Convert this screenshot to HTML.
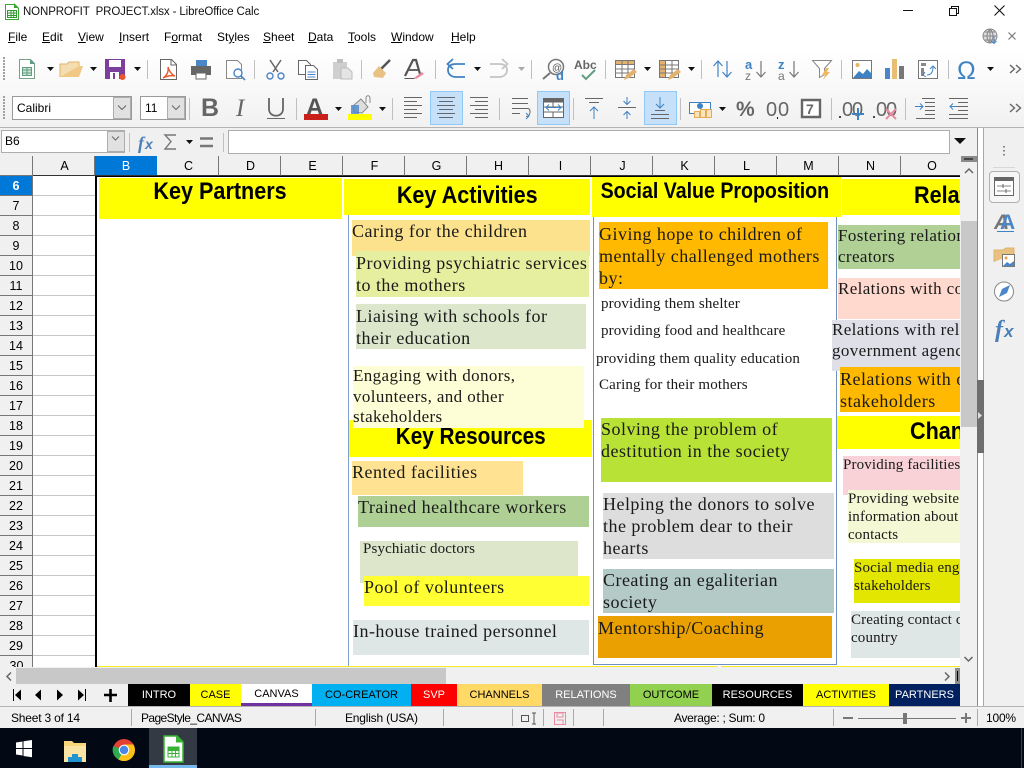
<!DOCTYPE html>
<html><head><meta charset="utf-8"><title>NONPROFIT PROJECT.xlsx - LibreOffice Calc</title>
<style>
html,body{margin:0;padding:0;width:1024px;height:768px;overflow:hidden;background:#f0f0f0;font-family:"Liberation Sans",sans-serif;font-size:12px;color:#000}
div,span{position:absolute;white-space:pre;box-sizing:border-box}
.m{top:30px;line-height:14px;font-size:12px}.m u{text-decoration:underline}
.hc{top:156px;height:20px;line-height:21px;text-align:center;width:62px;background:#f0f0f0;border-right:1px solid #777;border-bottom:1px solid #333;font-size:12.5px;padding-left:2px}
.rh{left:0;width:33px;height:20px;line-height:20px;text-align:center;background:#f0f0f0;border-bottom:1px solid #777;border-right:1px solid #777;font-size:12.5px}
.c{font-family:"Liberation Serif",serif;font-size:18px;line-height:22px;color:#1a1a1a;letter-spacing:.48px}
.f15{font-size:15px;line-height:18px;letter-spacing:.14px}
.f17{font-size:17px;letter-spacing:.38px}
.h{font-weight:bold;text-align:center;color:#000;font-size:24px;background:#ff0}
.h b{display:inline-block;transform:scaleX(.9)}
.h b.l{transform-origin:left center}
.t{top:684px;height:22px;line-height:22px;text-align:center;font-size:11px}
.s{top:711px;line-height:15px;font-size:12px;letter-spacing:-.2px}
.sp{top:709px;width:1px;height:17px;background:#aaa}
</style></head><body>
<!-- top chrome -->
<div style="left:0;top:0;width:1024px;height:50px;background:#fff"></div>
<div style="left:0;top:50px;width:1024px;height:77px;background:linear-gradient(#fff,#f1f1f1)"></div>
<div style="left:0;top:127px;width:1024px;height:1px;background:#b4b4b4"></div>
<div style="left:23px;top:5px;font-size:11.5px;letter-spacing:-.12px;line-height:15px;color:#111">NONPROFIT  PROJECT.xlsx - LibreOffice Calc</div>
<div class="m" style="left:8px"><u>F</u>ile</div>
<div class="m" style="left:42px"><u>E</u>dit</div>
<div class="m" style="left:78px"><u>V</u>iew</div>
<div class="m" style="left:119px"><u>I</u>nsert</div>
<div class="m" style="left:164px">F<u>o</u>rmat</div>
<div class="m" style="left:217px">St<u>y</u>les</div>
<div class="m" style="left:263px"><u>S</u>heet</div>
<div class="m" style="left:308px"><u>D</u>ata</div>
<div class="m" style="left:348px"><u>T</u>ools</div>
<div class="m" style="left:391px"><u>W</u>indow</div>
<div class="m" style="left:451px"><u>H</u>elp</div>

<!-- toolbar fields -->
<div style="left:12px;top:96px;width:120px;height:24px;background:#fff;border:1px solid #9a9a9a;line-height:22px;padding-left:4px;font-size:12px">Calibri</div>
<div style="left:113px;top:97px;width:18px;height:22px;background:#e1e1e1;border:1px solid #adadad"></div>
<div style="left:140px;top:96px;width:46px;height:24px;background:#fff;border:1px solid #9a9a9a;line-height:22px;padding-left:4px;font-size:12px">11</div>
<div style="left:167px;top:97px;width:18px;height:22px;background:#e1e1e1;border:1px solid #adadad"></div>
<div style="left:430px;top:91px;width:33px;height:34px;background:#c5e0f8;border:1px solid #90c8f6"></div>
<div style="left:537px;top:91px;width:33px;height:34px;background:#c5e0f8;border:1px solid #90c8f6"></div>
<div style="left:644px;top:91px;width:33px;height:34px;background:#c5e0f8;border:1px solid #90c8f6"></div>

<!-- formula bar -->
<div style="left:0;top:128px;width:977px;height:28px;background:#f0f0f0"></div>
<div style="left:1px;top:130px;width:124px;height:23px;background:#fff;border:1px solid #adadad;line-height:21px;padding-left:3px;font-size:12px">B6</div>
<div style="left:107px;top:131px;width:18px;height:21px;background:#e1e1e1;border:1px solid #adadad"></div>
<div style="left:228px;top:130px;width:722px;height:24px;background:#fff;border:1px solid #adadad"></div>

<!-- column headers -->
<div style="left:0;top:156px;width:33px;height:20px;background:#f0f0f0;border-right:1px solid #777;border-bottom:1px solid #777"></div>
<div class="hc" style="left:33px">A</div>
<div class="hc" style="left:95px;background:#0078d7;color:#fff;border-right:0;padding-left:0">B</div>
<div class="hc" style="left:157px">C</div>
<div class="hc" style="left:219px">D</div>
<div class="hc" style="left:281px">E</div>
<div class="hc" style="left:343px">F</div>
<div class="hc" style="left:405px">G</div>
<div class="hc" style="left:467px">H</div>
<div class="hc" style="left:529px">I</div>
<div class="hc" style="left:591px">J</div>
<div class="hc" style="left:653px">K</div>
<div class="hc" style="left:715px">L</div>
<div class="hc" style="left:777px">M</div>
<div class="hc" style="left:839px">N</div>
<div class="hc" style="left:901px;width:60px;border-right:0;padding-left:2px">O</div>

<!-- row headers -->
<div class="rh" style="top:176px;background:#0078d7;color:#fff;font-weight:bold">6</div>
<div class="rh" style="top:196px">7</div><div class="rh" style="top:216px">8</div><div class="rh" style="top:236px">9</div>
<div class="rh" style="top:256px">10</div><div class="rh" style="top:276px">11</div><div class="rh" style="top:296px">12</div>
<div class="rh" style="top:316px">13</div><div class="rh" style="top:336px">14</div><div class="rh" style="top:356px">15</div>
<div class="rh" style="top:376px">16</div><div class="rh" style="top:396px">17</div><div class="rh" style="top:416px">18</div>
<div class="rh" style="top:436px">19</div><div class="rh" style="top:456px">20</div><div class="rh" style="top:476px">21</div>
<div class="rh" style="top:496px">22</div><div class="rh" style="top:516px">23</div><div class="rh" style="top:536px">24</div>
<div class="rh" style="top:556px">25</div><div class="rh" style="top:576px">26</div><div class="rh" style="top:596px">27</div>
<div class="rh" style="top:616px">28</div><div class="rh" style="top:636px">29</div>
<div style="left:0;top:656px;width:33px;height:11px;overflow:hidden;background:#f0f0f0;border-right:1px solid #777"><span style="left:0;top:0;width:33px;text-align:center;line-height:20px;font-size:12.5px">30</span></div>

<!-- column A grid -->
<div style="left:33px;top:176px;width:62px;height:491px;background:repeating-linear-gradient(#fff 0,#fff 19px,#c6c6c6 19px,#c6c6c6 20px)"></div>

<!-- sheet -->
<div style="left:95px;top:176px;width:865px;height:491px;background:#fff;overflow:hidden">
<div style="left:0;top:0;width:2px;height:491px;background:#000"></div>
<div style="left:0;top:0;width:866px;height:1px;background:#000"></div>
<div style="left:2px;top:490px;width:864px;height:2px;background:#f7ea1e"></div>
<div style="left:623px;top:490px;width:3px;height:2px;background:#fff"></div>
<div style="left:253px;top:39px;width:1px;height:451px;background:#7f9fcc"></div>
<div style="left:498px;top:39px;width:244px;height:450px;border:1px solid #6f8fbf;border-top:0"></div>

<!-- shifted coordinates: left-95, top-176 -->
<div class="h" style="left:4px;top:2px;width:243px;height:41px;line-height:28px"><b>Key Partners</b></div>
<div class="h" style="left:249px;top:3px;width:246px;height:36px;line-height:33px"><b>Key Activities</b></div>
<div class="h" style="left:497px;top:1px;width:249px;height:40px;line-height:28px;font-size:22px;padding-right:4px"><b style="transform:translateX(-5.5px) scaleX(.89)">Social Value Proposition</b></div>
<div class="h" style="left:747px;top:3px;width:119px;height:36px;line-height:34px;text-align:left;padding-left:72px"><b class="l">Relationships</b></div>
<div class="h" style="left:254px;top:244px;width:243px;height:37px;line-height:33px"><b style="transform:scaleX(.865)">Key Resources</b></div>
<div class="h" style="left:742px;top:240px;width:124px;height:33px;line-height:32px;text-align:left;padding-left:73px"><b class="l">Channels</b></div>

<div class="c" style="left:257px;top:44px;width:238px;height:36px;background:#fde28d">Caring for the children</div>
<div class="c" style="left:261px;top:75px;width:233px;height:46px;background:#e6ef9f;padding-top:1px">Providing psychiatric services
to the mothers</div>
<div class="c" style="left:261px;top:128px;width:230px;height:45px;background:#dce6cb;padding-top:1px">Liaising with schools for
their education</div>
<div class="c f17" style="left:258px;top:190px;width:231px;height:62px;background:#fdfed5;line-height:20.5px">Engaging with donors,
volunteers, and other
stakeholders</div>
<div class="c" style="left:257px;top:285px;width:171px;height:34px;background:#ffe392">Rented facilities</div>
<div class="c" style="left:263px;top:320px;width:231px;height:31px;background:#afd095">Trained healthcare workers</div>
<div class="c f15" style="left:265px;top:365px;width:218px;height:42px;background:#dde6cb;line-height:17px;padding-left:3px">Psychiatic doctors</div>
<div class="c" style="left:269px;top:400px;width:225px;height:30px;background:#ffff33">Pool of volunteers</div>
<div class="c" style="left:258px;top:444px;width:236px;height:35px;background:#dfe7e6">In-house trained personnel</div>

<div class="c" style="left:504px;top:46px;width:229px;height:67px;background:#ffb900;padding-top:1px">Giving hope to children of
mentally challenged mothers
by:</div>
<div class="c f15" style="left:506px;top:119px">providing them shelter</div>
<div class="c f15" style="left:506px;top:146px">providing food and healthcare</div>
<div class="c f15" style="left:501px;top:174px">providing them quality education</div>
<div class="c f15" style="left:504px;top:200px">Caring for their mothers</div>
<div class="c" style="left:506px;top:242px;width:231px;height:64px;background:#b9e237">Solving the problem of
destitution in the society</div>
<div class="c" style="left:508px;top:317px;width:231px;height:66px;background:#dddddd">Helping the donors to solve
the problem dear to their
hearts</div>
<div class="c" style="left:508px;top:393px;width:231px;height:44px;background:#b3cac7">Creating an egaliterian
society</div>
<div class="c" style="left:503px;top:440px;width:234px;height:42px;background:#e9a000;line-height:24px">Mentorship/Coaching</div>

<div class="c f17" style="left:743px;top:49px;width:123px;height:44px;background:#b0d096;line-height:21px">Fostering relationships with co-
creators</div>
<div class="c f17" style="left:743px;top:102px;width:123px;height:41px;background:#ffd8ce;line-height:21px">Relations with community</div>
<div class="c f17" style="left:737px;top:144px;width:129px;height:51px;background:#dfdfe8;line-height:20.5px">Relations with relevant
government agencies</div>
<div class="c" style="left:745px;top:191px;width:121px;height:45px;background:#ffb900;padding-top:1px">Relations with other
stakeholders</div>
<div class="c f15" style="left:748px;top:280px;width:118px;height:39px;background:#f8d2d6">Providing facilities to mothers</div>
<div class="c f15" style="left:753px;top:314px;width:113px;height:53px;background:#f5f8d5">Providing website for
information about activities and
contacts</div>
<div class="c f15" style="left:759px;top:383px;width:107px;height:44px;background:#e3e600">Social media engagement with
stakeholders</div>
<div class="c f15" style="left:756px;top:435px;width:110px;height:47px;background:#dfe7e6">Creating contact centers across
country</div>
</div>

<!-- vertical scrollbar -->
<div style="left:960px;top:156px;width:17px;height:511px;background:#f0f0f0"></div>
<div style="left:961px;top:156px;width:16px;height:6px;background:#8b8b8b"></div>
<div style="left:961px;top:221px;width:16px;height:206px;background:#c8c8c8"></div>
<div style="left:977px;top:128px;width:1px;height:579px;background:#8a8a8a"></div>
<div style="left:978px;top:128px;width:5px;height:579px;background:#fff"></div>
<div style="left:983px;top:128px;width:1px;height:579px;background:#a8a8a8"></div>
<div style="left:977px;top:380px;width:7px;height:73px;background:#6e6e6e"></div>
<div style="left:984px;top:128px;width:40px;height:579px;background:#f0f0f0"></div>
<div style="left:989px;top:171px;width:31px;height:32px;border:1px solid #b0b0b0;border-radius:4px;background:#f6f6f6"></div>

<!-- hscroll -->
<div style="left:0;top:667px;width:961px;height:17px;background:#f0f0f0"></div>
<div style="left:16px;top:668px;width:430px;height:16px;background:#c8c8c8"></div>
<div style="left:955px;top:668px;width:5px;height:16px;background:#8b8b8b"></div>
<div style="left:957px;top:671px;width:1px;height:10px;background:#000"></div>

<!-- tabs -->
<div style="left:0;top:684px;width:977px;height:22px;background:#f0f0f0"></div>
<div class="t" style="left:128px;width:62px;background:#000;color:#fff">INTRO</div>
<div class="t" style="left:190px;width:51px;background:#ff0">CASE</div>
<div class="t" style="left:241px;width:71px;background:#fff;border-bottom:3px solid #7030a0;line-height:21px">CANVAS</div>
<div class="t" style="left:312px;width:99px;background:#00b0f0">CO-CREATOR</div>
<div class="t" style="left:411px;width:46px;background:#f00;color:#fff">SVP</div>
<div class="t" style="left:457px;width:85px;background:#ffd966">CHANNELS</div>
<div class="t" style="left:542px;width:88px;background:#808080;color:#fff">RELATIONS</div>
<div class="t" style="left:630px;width:82px;background:#92d050">OUTCOME</div>
<div class="t" style="left:712px;width:91px;background:#000;color:#fff">RESOURCES</div>
<div class="t" style="left:803px;width:86px;background:#ff0">ACTIVITIES</div>
<div class="t" style="left:889px;width:71px;background:#002060;color:#fff">PARTNERS</div>

<!-- status bar -->
<div style="left:0;top:706px;width:1024px;height:1px;background:#b4b4b4"></div>
<div style="left:0;top:707px;width:1024px;height:21px;background:#f0f0f0"></div>
<div class="s" style="left:11px">Sheet 3 of 14</div>
<div class="s" style="left:141px;letter-spacing:-.6px">PageStyle_CANVAS</div>
<div class="s" style="left:345px">English (USA)</div>
<div class="s" style="left:674px;letter-spacing:-.3px">Average: ; Sum: 0</div>
<div class="s" style="left:986px">100%</div>
<div class="sp" style="left:131px"></div><div class="sp" style="left:315px"></div><div class="sp" style="left:443px"></div>
<div class="sp" style="left:512px"></div><div class="sp" style="left:543px"></div><div class="sp" style="left:573px"></div><div class="sp" style="left:603px"></div>
<div class="sp" style="left:833px"></div><div class="sp" style="left:977px"></div>

<!-- taskbar -->
<div style="left:0;top:728px;width:1024px;height:40px;background:#020914"></div>
<div style="left:149px;top:728px;width:48px;height:40px;background:#333a44"></div>
<div style="left:149px;top:765px;width:48px;height:3px;background:#76b9ed"></div>

<!-- icon layer -->
<svg style="position:absolute;left:0;top:0" width="1024" height="768" viewBox="0 0 1024 768" fill="none">
<!-- title icon -->
<path d="M5.5 4.500h9l4 4v11h-13z" fill="#fff" stroke="#3aa535"/><path d="M14 3l5 5h-5z" fill="#3aa535"/><path d="M7.500 10.500h9v7h-9zM7.500 13h9M7.500 15.500h9M11 10.500v7M13.700 10.500v7" stroke="#2f9a2b"/>
<!-- window controls -->
<path d="M903 10.500h10" stroke="#111"/><path d="M949.500 8.500h7v7h-7zM951.500 8.500v-2h7v7h-2" stroke="#111"/><path d="M994.500 5.500l10 10M1004.500 5.500l-10 10" stroke="#111" stroke-width="1.100"/>
<!-- globe / close -->
<g stroke="#888"><circle cx="990" cy="36" r="7" fill="#ddd"/><path d="M983 36h14M990 29v14M985 32h10M985 40h10M990 29c-4 4-4 10 0 14M990 29c4 4 4 10 0 14"/></g><path d="M994 36v7M991.500 41l2.500 2.500 2.500-2.500" stroke="#4a86c8"/>
<path d="M1008.500 32.500l7 7M1015.500 32.500l-7 7" stroke="#777" stroke-width="1.200"/>

<!-- grips -->
<g stroke="#a0a0a0" stroke-width="2" stroke-dasharray="2 1"><path d="M4 57v23M4 96v24"/></g>

<!-- Toolbar 1 -->
<path d="M19.500 59.500h11l4 4v15h-15z" fill="#fff" stroke="#7aa08c"/><path d="M30 59l5 5h-5z" fill="#5f9e7e"/><path d="M22.500 67.500h9v8h-9z" stroke="#5f9e7e" fill="#cfe3d8"/><path d="M22.500 70h9M22.500 73h9M27 67.500v8" stroke="#5f9e7e"/>
<path d="M47 67h7l-3.500 4z" fill="#111"/>
<path d="M60 77l3-11h20l-4 11z" fill="#f0c987"/><path d="M60 77V64h7l2-2h10v4" fill="#f5ddb2" stroke="#e0b36a"/>
<path d="M90 67h7l-3.500 4z" fill="#111"/>
<path d="M105 59h20v20h-20z" fill="#7c3f9c"/><path d="M109 60h12v7h-12zM110 72h9v7h-9z" fill="#fff"/><path d="M113 73h2v6h-2z" fill="#7c3f9c"/><circle cx="122.500" cy="77" r="3" fill="#e8562e"/>
<path d="M134 67h7l-3.500 4z" fill="#111"/>
<path d="M147.500 60v19M254.500 60v19M361.500 60v19M435.500 60v19M531.500 60v19M605.500 60v19M701.500 60v19M841.500 60v19M948.500 60v19" stroke="#c0c0c0"/>
<!-- pdf -->
<path d="M160.500 59.500h11l5 5v15h-16z" fill="#fff" stroke="#666"/><path d="M171 60v5h5" stroke="#666"/><path d="M168 67c1 6-2 9-5 11 4-2 8-3 12-2-3-1-6-5-7-9z" stroke="#e8562e" stroke-width="1.400"/>
<!-- print -->
<path d="M196.500 60.500h10v6h-10z" fill="#4a86c8" stroke="#4a86c8"/><path d="M191 66h20v9h-20z" fill="#666"/><path d="M196 73h10v6h-10z" fill="#fff" stroke="#666"/>
<!-- preview -->
<path d="M226.500 60.500h11l4 4v14h-15z" fill="#fff" stroke="#888"/><circle cx="238" cy="73" r="4" fill="#fff" stroke="#4a86c8" stroke-width="1.400"/><path d="M241 76l4 4" stroke="#4a86c8" stroke-width="1.600"/>
<!-- cut -->
<path d="M270 60l8 12M281 60l-8 12" stroke="#666" stroke-width="1.500"/><circle cx="270" cy="76" r="3" stroke="#4a86c8" stroke-width="1.400"/><circle cx="281" cy="76" r="3" stroke="#4a86c8" stroke-width="1.400"/>
<!-- copy -->
<path d="M298.500 60.500h8l4 4v10h-12z" fill="#fff" stroke="#666"/><path d="M305.500 65.500h8l4 4v10h-12z" fill="#fff" stroke="#666"/><path d="M307.500 72h8M307.500 74.500h8M307.500 77h8" stroke="#4a86c8"/>
<!-- paste (disabled) -->
<path d="M333 62h14v17h-14z" fill="#cfcfcf"/><path d="M337 59h6v4h-6z" fill="#bdbdbd"/><path d="M341 68h7l4 4v7h-11z" fill="#e4e4e4" stroke="#bbb"/>
<!-- brush -->
<path d="M390 60l-9 9" stroke="#555" stroke-width="2.500"/><path d="M379 66l7 7-3 5-9-1-1-4z" fill="#e9c184"/>
<!-- clear formatting -->
<path d="M405 76l8-16h3l4 14" stroke="#555" stroke-width="2.200"/><path d="M409 70h9" stroke="#555" stroke-width="1.800"/><path d="M404.500 78.500h10" stroke="#555"/><path d="M414 78l8-6 2 2-8 5z" fill="#e98aa0"/>
<!-- undo -->
<path d="M463 77h-9c-5 0-8-3-8-7s3-6 8-6h9M451 59l-5.500 5 5.500 5" stroke="#3f82c4" stroke-width="1.800" transform="translate(2 0)"/>
<path d="M474 67h7l-3.500 4z" fill="#111"/>
<path d="M490 77h9c5 0 8-3 8-7s-3-6-8-6h-9M502 59l5.500 5-5.500 5" stroke="#c4c4c4" stroke-width="1.800"/>
<path d="M518 67h7l-3.500 4z" fill="#aaa"/>
<!-- find -->
<circle cx="556" cy="67" r="7.500" stroke="#777" stroke-width="1.500"/><path d="M550 73l-7 6" stroke="#777" stroke-width="2"/><text x="552" y="71" font-size="10" fill="#555" font-family="Liberation Sans">@</text><text x="556" y="80" font-size="13" fill="#3f82c4" font-family="Liberation Sans" font-weight="bold">d</text>
<!-- spell -->
<text x="574" y="69" font-size="12" font-weight="bold" fill="#666" font-family="Liberation Sans">Abc</text><path d="M582 75l4 4 9-9" stroke="#5f9e7e" stroke-width="2"/>
<!-- table rows -->
<path d="M615.500 60.500h19v17h-19z" fill="#fff" stroke="#777"/><path d="M615.500 60.500h19v4h-19z" fill="#e3b26e" stroke="#777"/><path d="M615.500 69h19M615.500 73h19M622 60.500v17M628 60.500v17" stroke="#777"/><path d="M624 80l2-5 8-6 3 3-8 6z" fill="#e3b26e"/>
<path d="M644 67h7l-3.500 4z" fill="#111"/>
<path d="M659.500 60.500h19v17h-19z" fill="#fff" stroke="#777"/><path d="M659.500 60.500h6v17h-6z" fill="#e3b26e" stroke="#777"/><path d="M659.500 65h19M659.500 69h19M659.500 73h19M672 60.500v17" stroke="#777"/><path d="M668 80l2-5 8-6 3 3-8 6z" fill="#e3b26e"/>
<path d="M688 67h7l-3.500 4z" fill="#111"/>
<!-- sort -->
<path d="M718 77V62M713.500 66l4.500-5 4.500 5" stroke="#3f82c4" stroke-width="1.200"/><path d="M727 61v15M722.500 72l4.500 5 4.500-5" stroke="#3f82c4" stroke-width="1.200"/>
<text x="745" y="69" font-size="13" font-weight="bold" fill="#3f82c4" font-family="Liberation Sans">a</text><text x="745" y="80" font-size="12" fill="#777" font-family="Liberation Sans">z</text><path d="M761 61v15M756.500 72l4.500 5 4.500-5" stroke="#777" stroke-width="1.200"/>
<text x="778" y="69" font-size="13" font-weight="bold" fill="#3f82c4" font-family="Liberation Sans">z</text><text x="778" y="80" font-size="12" fill="#777" font-family="Liberation Sans">a</text><path d="M794 61v15M789.500 72l4.500 5 4.500-5" stroke="#777" stroke-width="1.200"/>
<!-- autofilter -->
<path d="M812.500 60.500h19l-7 8v6l-5 3v-9z" fill="#fff" stroke="#888"/><path d="M826 68l-4 7h3l-2 5 7-8h-3l2-4z" fill="#eeb95c"/>
<!-- image -->
<path d="M852.500 60.500h19v18h-19z" fill="#fff" stroke="#777"/><circle cx="857.500" cy="65" r="2" fill="#e8b060"/><path d="M853 78l6-7 4 3 4-5 4 4v5z" fill="#3f82c4"/>
<!-- chart -->
<path d="M885 68h5v11h-5z" fill="#4a86c8"/><path d="M892 59h5v20h-5z" fill="#e8bd76"/><path d="M899 66h5v13h-5z" fill="#777"/>
<!-- pivot -->
<path d="M918.500 60.500h19v18h-19z" fill="#fff" stroke="#777"/><path d="M921 63h5v3h-5zM921 68h3v8h-3z" fill="#888"/><path d="M927 75c4 0 6-3 6-8M930 69l3-3 3 3M925 72l-2 3 3 2" stroke="#3f82c4"/>
<!-- omega -->
<text x="957" y="79" font-size="25" fill="#3f82c4" font-family="Liberation Sans">Ω</text>
<path d="M987 67h7l-3.500 4z" fill="#111"/>
<path d="M1010 65l4.500 4-4.500 4M1016 65l4.500 4-4.500 4" stroke="#666" stroke-width="1.400"/>

<!-- Toolbar 2 -->
<path d="M118 105.500l4 4 4-4M172 105.500l4 4 4-4M112 136.500l3.500 3.500 3.500-3.500" stroke="#666"/>
<path d="M189.500 98v22M296.500 98v22M392.500 98v22M499.500 98v22M573.500 98v22M680.500 98v22M831.500 98v22M905.500 98v22" stroke="#c0c0c0"/>
<text x="201" y="116" font-size="25" font-weight="bold" fill="#666" font-family="Liberation Sans">B</text>
<text x="236" y="116" font-size="25" fill="#666" font-style="italic" font-family="Liberation Serif">I</text>
<path d="M269 98v11c0 9 14 9 14 0V98" stroke="#666" stroke-width="1.800"/><path d="M267 118.500h18" stroke="#666"/>
<text x="306" y="115" font-size="24" font-weight="bold" fill="#555" font-family="Liberation Sans">A</text><path d="M304 114h24v6h-24z" fill="#c9201c"/>
<path d="M335 107h7l-3.500 4z" fill="#111"/>
<path d="M348 114h24v6h-24z" fill="#ff0"/><path d="M353 106l8-7 7 8-6 6-8-1z" fill="#ddd" stroke="#888"/><path d="M351 105h8v9h-8z" fill="#4a86c8" opacity=".8"/><path d="M366 103v-5c0-3 4-3 4 0v5" stroke="#888"/>
<path d="M379 107h7l-3.500 4z" fill="#111"/>
<path d="M404 98.500h18M404 102.500h13M404 106.500h18M404 110.500h13M404 114.500h18M404 118.500h13" stroke="#666" transform="translate(0 -1)"/>
<path d="M437 98.500h18M439 102.500h14M437 106.500h18M439 110.500h14M437 114.500h18M439 118.500h14" stroke="#666" transform="translate(0 -1)"/>
<path d="M470 98.500h18M475 102.500h13M470 106.500h18M475 110.500h13M470 114.500h18M475 118.500h13" stroke="#666" transform="translate(0 -1)"/>
<path d="M512 98.500h16M512 103.500h16M512 108.500h16c3 0 3 8-2 8M512 113.500h8" stroke="#666"/><path d="M526 113l3 3-3 3" stroke="#3f82c4"/>
<path d="M543.500 98.500h20v19h-20z" fill="#fff" stroke="#666"/><path d="M543.500 98.500h20v4h-20z" fill="#666"/><path d="M543.500 107h20M543.500 112h20M553 102v5M553 112v5" stroke="#666"/><path d="M546 107.500h15M549 104.500l-3 3 3 3M558 104.500l3 3-3 3" stroke="#3f82c4"/>
<path d="M585 98.500h18M589 102.500h10" stroke="#666"/><path d="M594 119v-12M590 111l4-4 4 4" stroke="#3f82c4"/>
<path d="M618 107.500h18" stroke="#666"/><path d="M627 97v7M623.500 101l3.500 3.500 3.500-3.500M627 119v-8M623.500 115l3.500-3.500 3.500 3.500" stroke="#3f82c4"/>
<path d="M651 114.500h18M651 118.500h18M655 110.500h10" stroke="#666"/><path d="M660 97v11M656 104l4 4 4-4" stroke="#3f82c4"/>
<path d="M689.500 102.500h21v11h-21z" fill="#fff" stroke="#3f82c4"/><circle cx="700" cy="106" r="3" fill="#3f82c4"/><g fill="#fbe3bd" stroke="#e6ab55"><rect x="694.500" y="111.500" width="5" height="6"/><rect x="700.500" y="109.500" width="5" height="8"/><rect x="706.500" y="109.500" width="5" height="8"/></g>
<path d="M719 107h7l-3.500 4z" fill="#111"/>
<text x="736" y="116" font-size="21" font-weight="bold" fill="#666" font-family="Liberation Sans">%</text>
<text x="766" y="116" font-size="20" fill="#666" font-family="Liberation Sans">0</text><text x="778" y="116" font-size="20" fill="#666" font-family="Liberation Sans">0</text><path d="M777.500 117v2" stroke="#111"/>
<path d="M802 100h18v17h-18z" fill="#fff" stroke="#666" stroke-width="2.400"/><text x="806" y="114" font-size="14" font-weight="bold" fill="#666" font-family="Liberation Sans">7</text>
<text x="842" y="116" font-size="20" fill="#666" font-family="Liberation Sans">0</text><text x="852" y="116" font-size="20" fill="#666" font-family="Liberation Sans">0</text><path d="M840 116v2M874 116v2" stroke="#111" stroke-width="1.500"/><path d="M858 108v12M852 114h12" stroke="#3f82c4" stroke-width="2"/>
<text x="876" y="116" font-size="20" fill="#666" font-family="Liberation Sans">0</text><text x="886" y="116" font-size="20" fill="#666" font-family="Liberation Sans">0</text><path d="M886 109l10 10M896 109l-10 10" stroke="#e98aa0" stroke-width="2"/>
<path d="M922 98.500h13M925 102.500h10M925 106.500h10M925 110.500h10M925 114.500h10M916 118.500h19" stroke="#666"/><path d="M915 106.500h8M920 103.500l3 3-3 3" stroke="#3f82c4"/>
<path d="M949 98.500h19M958 102.500h10M958 106.500h10M958 110.500h10M949 114.500h19M949 118.500h19" stroke="#666"/><path d="M958 106.500h-8M953 103.500l-3 3 3 3" stroke="#3f82c4"/>
<path d="M1010 104l4.500 4-4.500 4M1016 104l4.500 4-4.500 4" stroke="#666" stroke-width="1.400"/>

<!-- formula bar icons -->
<path d="M129.500 133v19M223.500 133v19" stroke="#c0c0c0"/>
<text x="138" y="149" font-size="18" font-weight="bold" font-style="italic" fill="#4a7fb8" font-family="Liberation Serif">f</text><text x="145" y="149" font-size="14" font-weight="bold" font-style="italic" fill="#4a7fb8" font-family="Liberation Sans">x</text>
<path d="M176 135h-11l6 6.500-6 7.500h11" stroke="#777" stroke-width="1.400"/>
<path d="M186 140h7l-3.500 4z" fill="#111"/>
<path d="M200 138.500h13M200 146h13" stroke="#777" stroke-width="2.400"/>
<path d="M954 138h12l-6 6z" fill="#111"/>

<!-- vertical scrollbar marks -->
<path d="M964 159h9" stroke="#000"/>
<path d="M965 173l4-4 4 4" stroke="#666" stroke-width="1.500"/>
<path d="M964.500 657l4 4 4-4" stroke="#666" stroke-width="1.500"/>
<path d="M978 412l4 3.500-4 3.500z" fill="#ddd"/>

<!-- sidebar icons -->
<path d="M1004 146v1.500M1004 150v1.500M1004 154v1.500" stroke="#777" stroke-width="1.800"/>
<path d="M993 167.500h22" stroke="#d8d8d8"/>
<path d="M994.500 177.500h19v18h-19z" fill="#fff" stroke="#666"/><path d="M994 177h20v4h-20z" fill="#666"/><path d="M997 186h14M997 191h14" stroke="#888"/><path d="M1003 184v4M1006 189v4" stroke="#666"/>
<text x="994" y="229" font-size="21" font-weight="bold" fill="#777" font-family="Liberation Sans" font-style="italic">A</text><text x="1000" y="229" font-size="21" font-weight="bold" fill="#4a86c8" font-family="Liberation Sans">A</text><path d="M997 231.500h17" stroke="#3f82c4"/>
<path d="M994 262v-12h9l3-2h8v6" fill="#e8c082" stroke="#e0b36a"/><path d="M1002.500 254.500h12v12h-12z" fill="#fff" stroke="#777"/><circle cx="1006" cy="258" r="1.500" fill="#e8a050"/><path d="M1003 266l4-4 3 2 4-3v5z" fill="#4a86c8"/>
<circle cx="1004" cy="291.500" r="9.500" fill="#fff" stroke="#888"/><path d="M999 297l3-8 8-4-3 8z" fill="#4a86c8"/>
<text x="995" y="337" font-size="24" font-weight="bold" font-style="italic" fill="#4a7fb8" font-family="Liberation Serif">f</text><text x="1004" y="337" font-size="17" font-weight="bold" fill="#4a7fb8" font-family="Liberation Sans" font-style="italic">x</text>

<!-- hscroll arrows -->
<path d="M11 672.500l-4 4 4 4" stroke="#666" stroke-width="1.500"/>
<path d="M945 672.500l4 4-4 4" stroke="#666" stroke-width="1.500"/>

<!-- tab nav -->
<path d="M13.500 689v12" stroke="#000"/><path d="M21 689.500v11l-6-5.500z" fill="#000"/>
<path d="M41 689.500v11l-6-5.500z" fill="#000"/><path d="M57 689.500v11l6-5.500z" fill="#000"/>
<path d="M78 689.500v11l6-5.500z" fill="#000"/><path d="M85.500 689v12" stroke="#000"/>
<path d="M104 695h13M110.500 689v13" stroke="#000" stroke-width="2.600"/>

<!-- status icons -->
<path d="M521.500 715.500h7v6h-7z" stroke="#555"/><path d="M534 713v11M532 713h4M532 724h4" stroke="#555"/>
<path d="M554.500 712.500h11v12h-11z" stroke="#e98aa0"/><path d="M557 713h6v4h-6zM557 720h6v4" stroke="#e98aa0"/>
<path d="M843 718h10M961 718h10M966 713v10" stroke="#777" stroke-width="2"/>
<path d="M858 718.500h98" stroke="#777"/><path d="M903 713h4v11h-4z" fill="#777"/>

<!-- taskbar icons -->
<path d="M16 742.500l6.500-1v6.500H16zM23.500 741.300l8.500-1.300v8h-8.500zM16 749h6.500v6.500L16 754.500zM23.500 749H32v8.300l-8.500-1.300z" fill="#fff"/>
<path d="M64 741h8l2 2h12v19H64z" fill="#f7d57a"/><path d="M64 746h22v16H64z" fill="#f9e3a5"/><path d="M68 762v-5h4v-3h6v3h4v5z" fill="#1e94d2"/>
<circle cx="124" cy="750" r="11" fill="#e34133"/><path d="M124 750L133.500 755.500A11 11 0 0 1 118 759.300z" fill="#fbc116"/><path d="M124 750l-5.500 9.500A11 11 0 0 1 113.300 746z" fill="#2da94f"/><path d="M124 750l9.500 5.500A11 11 0 0 0 135 750a11 11 0 0 0-1.500-5.500H124z" fill="#fbc116"/><circle cx="124" cy="750" r="5.300" fill="#fff"/><circle cx="124" cy="750" r="4.200" fill="#4a86e8"/>
<path d="M164 736h13l6 6v20h-19z" fill="#fff" stroke="#36b334" stroke-width="1.500"/><path d="M176 736l7 6.500h-7z" fill="#36b334"/><path d="M168 747h11v10h-11z" fill="#fff" stroke="#36b334"/><path d="M168 750.500h11M168 753.500h11M172 747v10M175.500 747v10" stroke="#36b334"/><path d="M168 747h11v3h-11z" fill="#36b334"/>
<path d="M1021.500 728v40" stroke="#3a3f48"/>
</svg>
</body></html>
